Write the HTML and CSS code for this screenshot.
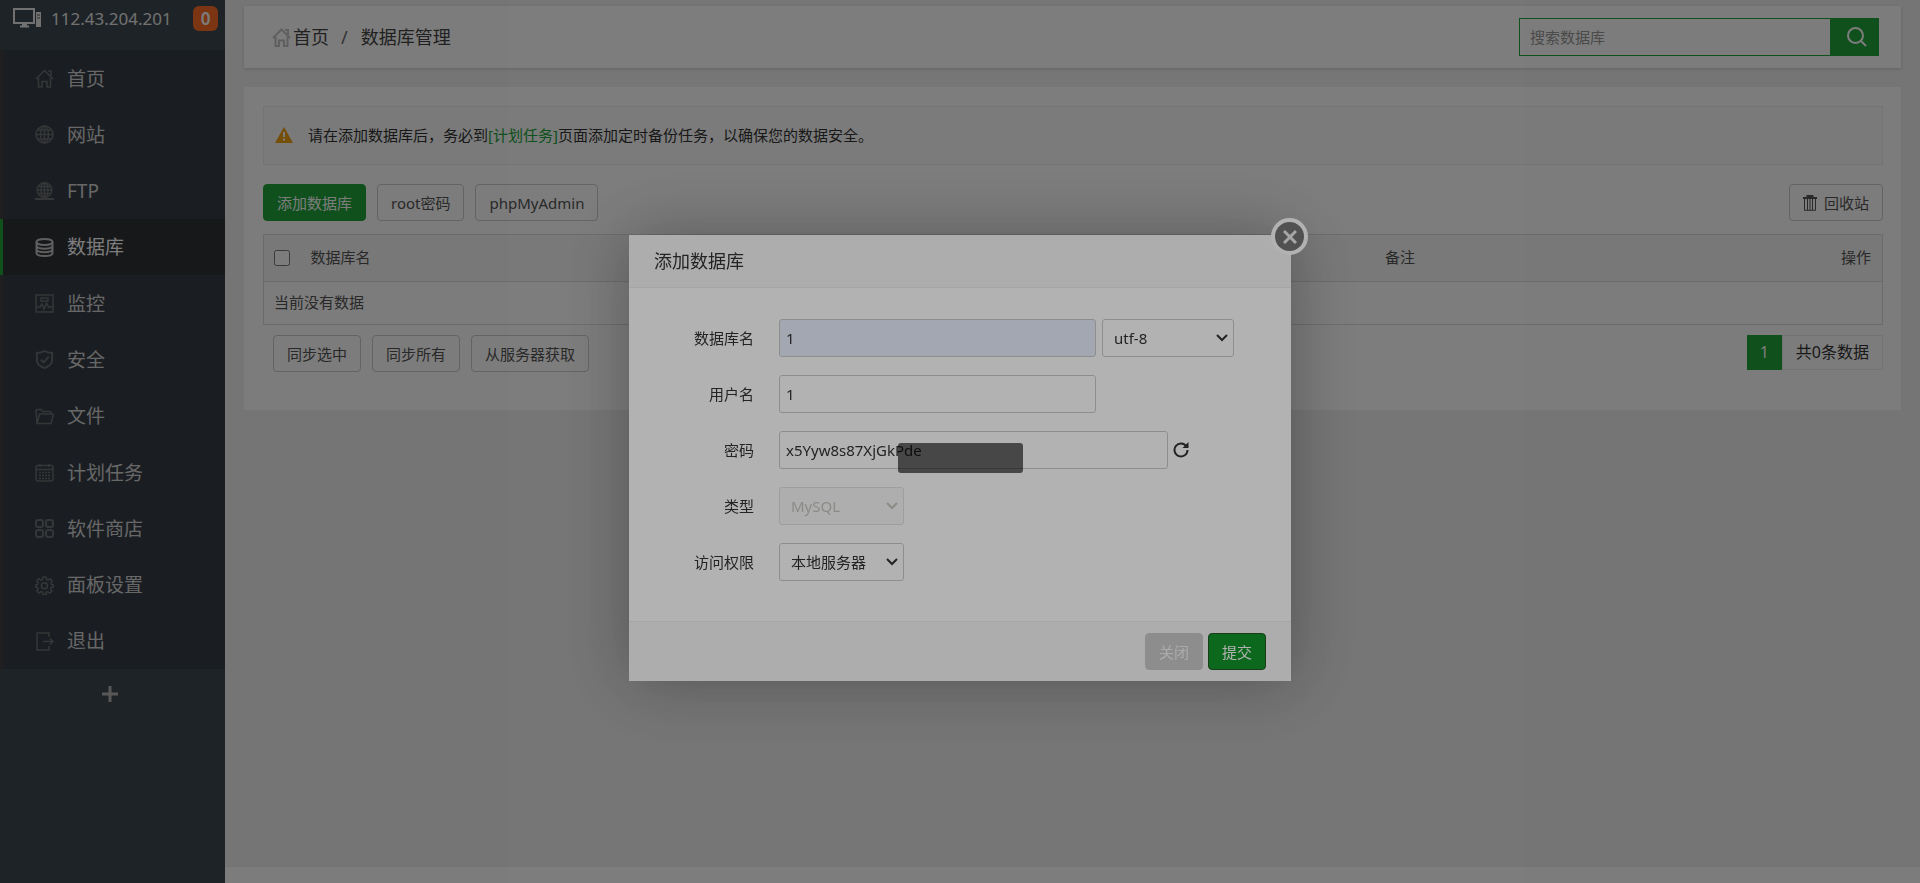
FILE: index.html
```
<!DOCTYPE html>
<html lang="zh-CN">
<head>
  <meta charset="UTF-8">
  <meta name="viewport" content="width=device-width, initial-scale=1.0">
  <title>数据库管理</title>
  <link rel="stylesheet" href="styles.css">
</head>
<body>
  <aside class="sidebar">
    <div class="server">
      <svg class="server-icon" viewBox="0 0 29 20" fill="none" stroke="currentColor"><rect x="1" y="1" width="20" height="14" stroke-width="2"/><path d="M7 18.500h9M9 17h5" stroke-width="2"/><path d="M23 4h5v15h-5z" fill="currentColor" stroke="none"/><path d="M24 7h3M24 10h3" stroke="#555"/></svg>
      <span class="server-ip">112.43.204.201</span>
      <a class="badge" href="#">0</a>
    </div>
    <nav>
      <ul class="menu">
        <li><a href="#"><svg viewBox="0 0 19 19" stroke-width="1.5"><path d="M1 10l8.500-8.500L18 10M13 2h3v5M3.500 9v9H7v-5.500h5V18h3.500V9"/></svg>首页</a></li>
        <li><a href="#"><svg viewBox="0 0 19 19" stroke-width="1.5"><circle cx="9.500" cy="9.500" r="8.500"/><ellipse cx="9.500" cy="9.500" rx="4" ry="8.500"/><path d="M9.500 1v17M1 9.500h17M2.500 5h14M2.500 14h14"/></svg>网站</a></li>
        <li><a href="#"><svg viewBox="0 0 19 19" stroke-width="1.5"><circle cx="9.500" cy="8" r="7.300"/><ellipse cx="9.500" cy="8" rx="3.500" ry="7.300"/><path d="M9.500 1v14M2 8h15M3.500 4.500h12M3.500 11.500h12"/><path d="M0 17h19M7 17h5" stroke-width="2"/></svg>FTP</a></li>
        <li class="current"><a href="#"><svg viewBox="0 0 19 19" stroke-width="2"><ellipse cx="9.500" cy="4" rx="8" ry="3"/><path d="M1.500 4v11c0 4 16 4 16 0V4M1.500 8c1 3.500 15 3.500 16 0M1.500 11.500c1 3.500 15 3.500 16 0"/></svg>数据库</a></li>
        <li><a href="#"><svg viewBox="0 0 19 19" stroke-width="1.5"><path d="M1 1h17v17H1zM6 4h7v3H6zM1 13h4l2-3 2 5 2.500-6 2 4H18"/></svg>监控</a></li>
        <li><a href="#"><svg viewBox="0 0 19 20" stroke-width="2"><path d="M9.500 1c3 2 5 2 8 2v8c0 4-4 6.500-8 8-4-1.500-8-4-8-8V3c3 0 5 0 8-2zM5.500 10l3 3 5.500-6"/></svg>安全</a></li>
        <li><a href="#"><svg viewBox="0 0 19 19" stroke-width="1.5"><path d="M2 16.500L1 3.500Q1 2.500 2 2.500h4l1.500 2H15q1 0 1 1v1M2 16.500L4.500 7h14L16 16.500z"/></svg>文件</a></li>
        <li><a href="#"><svg viewBox="0 0 19 19" stroke-width="1.5"><rect x="1" y="2.500" width="17" height="15.500" rx="2"/><path d="M1 6.500h17M5 1v3M14 1v3"/><path d="M4 9.500h11M4 12.500h11M4 15.500h11" stroke-dasharray="2 1"/></svg>计划任务</a></li>
        <li><a href="#"><svg viewBox="0 0 19 19" stroke-width="2"><rect x="1" y="1" width="7" height="7" rx="2"/><rect x="11" y="1" width="7" height="7" rx="2"/><rect x="1" y="11" width="7" height="7" rx="2"/><rect x="11" y="11" width="7" height="7" rx="2"/></svg>软件商店</a></li>
        <li><a href="#"><svg viewBox="0 0 19 19" stroke-width="1.5"><path d="M8 1h3l.5 2.500 1.500.6 2.200-1.300 2 2-1.300 2.200.6 1.500L18.500 9v2l-2.300.5-.6 1.500 1.300 2.100-2 2-2.200-1.300-1.500.6L11 18.500H8l-.5-2.200-1.500-.6-2.200 1.300-2-2 1.300-2.100-.6-1.500L.5 11V9l2-.5.6-1.500-1.300-2.200 2-2L6 4.100l1.500-.6z"/><circle cx="9.500" cy="9.800" r="3"/></svg>面板设置</a></li>
        <li><a href="#"><svg viewBox="0 0 19 19" stroke-width="1.5"><path d="M14 5V1H2v17h12v-4M8 9.500h10M15 6.500l3 3-3 3"/></svg>退出</a></li>
      </ul>
    </nav>
    <button class="menu-add" type="button" aria-label="添加菜单"><svg viewBox="0 0 16 16"><path d="M8 0v16M0 8h16"/></svg></button>
  </aside>

  <div class="main">
    <header class="topbar">
      <nav class="crumbs">
        <svg viewBox="0 0 19 19"><path d="M1 10l8.500-8.500L18 10M13 2h3v5M3.500 9v9H7v-5.500h5V18h3.500V9"/></svg>
        <a href="#">首页</a><span class="slash">/</span><span>数据库管理</span>
      </nav>
      <form class="search">
        <input type="text" placeholder="搜索数据库" aria-label="搜索数据库">
        <button type="button" aria-label="搜索"><svg viewBox="0 0 20 20"><circle cx="8.500" cy="8.500" r="7.500"/><path d="M14 14l5 5"/></svg></button>
      </form>
    </header>

    <main class="panel">
      <div class="notice">
        <svg viewBox="0 0 18 16"><path d="M9 0l9 16H0z" fill="#f0a010"/><path d="M9 5v5M9 11.500v2" stroke="#fff" stroke-width="2"/></svg>
        <p>请在添加数据库后，务必到<a href="#">[计划任务]</a>页面添加定时备份任务，以确保您的数据安全。</p>
      </div>

      <div class="toolbar">
        <button class="btn btn-success" type="button">添加数据库</button>
        <button class="btn" type="button">root密码</button>
        <button class="btn" type="button">phpMyAdmin</button>
        <button class="btn btn-recycle" type="button"><svg viewBox="0 0 14 16"><path d="M0 3h14M4.500 2.500V1h5v1.500" stroke-width="2"/><path d="M1.500 4v11.300h11V4M4.500 4v11M7 4v11M9.500 4v11"/></svg>回收站</button>
      </div>

      <table class="data-table">
        <thead>
          <tr>
            <th class="col-check"><input type="checkbox" aria-label="全选"></th>
            <th class="col-name">数据库名</th>
            <th class="col-note">备注</th>
            <th class="col-action">操作</th>
          </tr>
        </thead>
        <tbody>
          <tr><td colspan="4">当前没有数据</td></tr>
        </tbody>
      </table>

      <div class="table-foot">
        <div class="sync-btns">
          <button class="btn" type="button">同步选中</button>
          <button class="btn" type="button">同步所有</button>
          <button class="btn" type="button">从服务器获取</button>
        </div>
        <div class="pager"><span class="page-cur">1</span><span class="page-count">共0条数据</span></div>
      </div>
    </main>

    <footer class="footer"></footer>
  </div>

  <div class="shade"></div>

  <div class="dialog-wrap">
    <div class="dialog" role="dialog" aria-labelledby="dialogTitle">
      <h2 class="dialog-title" id="dialogTitle">添加数据库</h2>
      <button class="dialog-close" type="button" aria-label="关闭窗口"><svg viewBox="0 0 14 14"><path d="M1 1l12 12M13 1L1 13"/></svg></button>
      <form class="dialog-form">
        <div class="line">
          <label for="dbName">数据库名</label>
          <input class="autofill" type="text" id="dbName" value="1">
          <select class="sel-code" aria-label="编码"><option>utf-8</option></select>
        </div>
        <div class="line">
          <label for="dbUser">用户名</label>
          <input type="text" id="dbUser" value="1">
        </div>
        <div class="line">
          <label for="dbPass">密码</label>
          <input class="input-pass" type="text" id="dbPass" value="x5Yyw8s87XjGkPde">
          <button class="refresh" type="button" aria-label="随机密码"><svg viewBox="0 0 16 16"><path d="M13.500 4.500A6.500 6.500 0 1 0 14.500 8"/><path d="M15.500 0v6h-6z" class="tip"/></svg></button>
        </div>
        <div class="line">
          <label for="dbType">类型</label>
          <select id="dbType" disabled><option>MySQL</option></select>
        </div>
        <div class="line">
          <label for="dbAccess">访问权限</label>
          <select id="dbAccess"><option>本地服务器</option></select>
        </div>
      </form>
      <div class="dialog-foot">
        <button class="btn btn-cancel" type="button">关闭</button>
        <button class="btn btn-submit" type="button">提交</button>
      </div>
    </div>
  </div>

  <div class="shade shade-top"><div class="loading"></div></div>
</body>
</html>
```
FILE: styles.css
```
* { box-sizing: border-box; }
body { margin: 0; min-height: 100vh; display: flex; background: #f1f1f1; color: #555; font: 15px/20px "Noto Sans", "Noto Sans CJK SC", sans-serif; }
a { color: inherit; text-decoration: none; }
button, input, select { font: inherit; color: inherit; margin: 0; }
svg { display: block; flex: none; fill: none; stroke: currentColor; }
ul, p, h2 { margin: 0; padding: 0; }

/* sidebar */
.sidebar { width: 225px; flex: none; background: #3e4950; display: flex; flex-direction: column; }
.server { height: 50px; padding: 6px 7px 0 13px; display: flex; align-items: flex-start; color: #e8e8e8; }
.server-icon { width: 29px; height: 20px; margin-top: 2px; }
.server-ip { flex: 1; padding-left: 9px; font-size: 17px; line-height: 25px; }
.badge { width: 25px; height: 25px; border-radius: 6px; background: #fc6d26; color: #fff; font-size: 17px; font-weight: 600; line-height: 25px; text-align: center; }
.menu { list-style: none; min-height: 619px; display: grid; grid-auto-rows: 1fr; background: #373e46; }
.menu li { display: flex; border-left: 3px solid #404040; }
.menu a { flex: 1; padding: 1px 0 0 32px; display: flex; align-items: center; gap: 13px; font-size: 19px; line-height: 28px; color: #d4d4d4; }
.menu svg { width: 19px; height: 19px; color: #6c6f72; }
.menu .current { background: #2f3237; border-left-color: #20a53a; }
.menu .current a { color: #fff; }
.menu .current svg { color: #c4c4c4; }
.menu-add { border: 0; background: none; height: 50px; padding: 0 6px 0 0; display: flex; align-items: center; justify-content: center; color: #b4b4b4; }
.menu-add svg { width: 16px; height: 16px; stroke-width: 3; }

/* content */
.main { flex: 1; min-width: 0; display: flex; flex-direction: column; padding-top: 6px; }
.topbar { margin: 0 19px; height: 62px; padding: 0 22px 0 28px; background: #fff; box-shadow: 0 1px 3px rgba(0,0,0,.15); display: flex; align-items: center; justify-content: space-between; }
.crumbs { display: flex; align-items: center; font-size: 18px; line-height: 26px; color: #444; }
.crumbs svg { width: 19px; height: 19px; margin-right: 2px; color: #c4c4c4; stroke-width: 2; }
.slash { padding: 0 13px 0 12px; color: #666; }
.search { display: flex; }
.search input { width: 311px; height: 38px; padding: 0 10px; border: 1px solid #20a53a; border-right: 0; background: #fff; outline: 0; }
.search input::placeholder { color: #999; opacity: 1; }
.search button { width: 49px; height: 38px; padding: 0 0 0 4px; border: 0; background: #20a53a; color: #fff; display: flex; align-items: center; justify-content: center; }
.search svg { width: 20px; height: 20px; stroke-width: 2; }
.panel { margin: 19px 19px 0; padding: 19px 18px 38px 19px; background: #fff; }
.notice { height: 59px; padding: 0 11px 2px; border: 1px solid #eee; background: #fafafa; display: flex; align-items: center; gap: 15px; color: #333; }
.notice svg { width: 18px; height: 16px; stroke: none; }
.notice a { color: #20a53a; }

.btn { height: 37px; padding: 0 13px; border: 1px solid #ccc; border-radius: 4px; background: #fff; line-height: 20px; white-space: nowrap; }
.btn-success { background: #20a53a; border-color: #20a53a; color: #fff; }
.toolbar { display: flex; gap: 11px; margin: 19px 0 13px; }
.btn-recycle { margin-left: auto; display: flex; align-items: center; gap: 7px; }
.btn-recycle svg { width: 14px; height: 16px; }

.data-table { width: 100%; border-collapse: collapse; border: 1px solid #ddd; }
.data-table th { height: 47px; padding: 0 10px 2px; background: #f6f6f6; font-weight: normal; text-align: left; }
.data-table td { height: 43px; padding: 0 10px 2px; border-top: 1px solid #ddd; }
.data-table input { display: block; width: 16px; height: 16px; }
.data-table .col-check { width: 37px; padding-bottom: 0; }
.data-table .col-name { width: 66%; }
.data-table .col-note { padding-left: 16px; }
.data-table .col-action { text-align: right; padding-right: 11px; }
.table-foot { display: flex; justify-content: space-between; padding: 10px 0 0 10px; }
.sync-btns { display: flex; gap: 11px; }
.pager { display: flex; height: 35px; font-size: 16px; line-height: 33px; color: #333; }
.page-cur { width: 35px; background: #20a53a; color: #fff; line-height: 35px; text-align: center; }
.page-count { padding: 0 13px; border: 1px solid #ececec; }
.footer { height: 16px; margin-top: auto; background: #fff; }

/* dialog */
.shade { position: fixed; inset: 0; z-index: 10; background: rgba(0,0,0,.3); }
.dialog-wrap { position: fixed; inset: 0; z-index: 20; display: flex; justify-content: center; align-items: center; padding-top: 33px; }
.dialog { position: relative; width: 662px; background: #fff; color: #333; box-shadow: 1px 1px 62px rgba(0,0,0,.3); }
.dialog-title { height: 53px; padding: 0 25px; border-bottom: 1px solid #eee; background: #f8f8f8; font-size: 18px; font-weight: normal; line-height: 52px; }
.dialog-close { position: absolute; top: -17px; right: -17px; width: 37px; height: 37px; padding: 0; border: 4px solid #fff; border-radius: 50%; background: #757575; color: #eee; display: flex; align-items: center; justify-content: center; }
.dialog-close svg { width: 14px; height: 14px; stroke-width: 3; }
.dialog-form { padding: 31px 25px 40px; display: flex; flex-direction: column; gap: 18px; }
.line { display: flex; align-items: center; height: 38px; }
.line label { width: 100px; margin-right: 25px; text-align: right; }
.line input { width: 317px; height: 38px; padding: 0 6px; border: 1px solid #ccc; border-radius: 3px; background: #fff; outline: 0; }
.line .autofill { background: #e8f0fe; }
.line .input-pass { width: 389px; }
.line select { appearance: none; width: 125px; height: 38px; padding: 0 11px; border: 1px solid #ccc; border-radius: 3px; background: #fff url("data:image/svg+xml,%3Csvg xmlns='http://www.w3.org/2000/svg' viewBox='0 0 12 8'%3E%3Cpath d='M1 1l5 5 5-5' fill='none' stroke='%23333' stroke-width='2'/%3E%3C/svg%3E") no-repeat right 5px center / 12px 8px; }
.line select:disabled { background-color: #fafafa; background-image: url("data:image/svg+xml,%3Csvg xmlns='http://www.w3.org/2000/svg' viewBox='0 0 12 8'%3E%3Cpath d='M1 1l5 5 5-5' fill='none' stroke='%23c8c8c0' stroke-width='2'/%3E%3C/svg%3E"); color: #c8c8c0; border-color: #e2e2e2; opacity: 1; }
.line .sel-code { width: 132px; margin-left: 6px; }
.refresh { padding: 0; margin-left: 5px; border: 0; background: none; }
.refresh svg { width: 16px; height: 16px; stroke-width: 2; }
.refresh .tip { fill: currentColor; stroke: none; }
.dialog-foot { height: 60px; padding: 0 25px; border-top: 1px solid #edf1f0; background: #f6f8f7; display: flex; align-items: center; justify-content: flex-end; gap: 5px; }
.btn-cancel { background: #cbcbcb; border-color: #cbcbcb; color: #f4f4f4; }
.btn-submit { background: #10952a; border-color: #255625; color: #fff; }

/* request in progress */
.shade-top { z-index: 30; display: flex; align-items: center; justify-content: center; padding-top: 33px; }
.loading { width: 125px; height: 30px; border-radius: 3px; background: rgba(0,0,0,.6); }
```
